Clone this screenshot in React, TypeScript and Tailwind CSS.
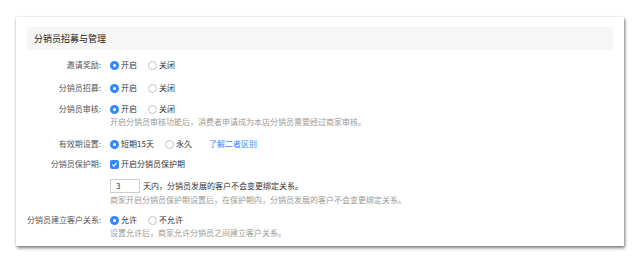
import React from 'react';

function Radio({ checked, label }: { checked?: boolean; label: string }) {
  return (
    <span className="flex items-center">
      {checked ? (
        <span className="flex h-[9px] w-[9px] items-center justify-center rounded-full bg-[#3388ff]">
          <span className="h-[3px] w-[3px] rounded-full bg-white" />
        </span>
      ) : (
        <span className="h-[9px] w-[9px] rounded-full border border-[#c4c4c4] bg-white" />
      )}
      <span className="ml-[2px] text-[#333]">{label}</span>
    </span>
  );
}

function Row({ label, mt, children }: { label: string; mt: string; children: React.ReactNode }) {
  return (
    <div className={`flex ${mt}`}>
      <div className="w-[83px] shrink-0 whitespace-nowrap pr-[9px] text-right leading-[12px] text-[#555]">
        {label}:
      </div>
      <div className="flex-1">{children}</div>
    </div>
  );
}

export default function App() {
  return (
    <div
      className="h-[260px] w-[640px] bg-white pl-[16px] pt-[17px] text-[8px] leading-[12px]"
      style={{ fontFamily: '"Noto Sans CJK SC", "Noto Sans", sans-serif' }}
    >
      <div className="h-[229px] w-[608px] bg-white px-[11px] pt-[10px] shadow-[1px_2px_3px_rgba(0,0,0,0.5),0_0_2px_rgba(0,0,0,0.12)]">
        <div className="flex h-[23px] items-center bg-[#f6f6f6] pl-[7px] text-[9px] text-[#222]">
          分销员招募与管理
        </div>

        <Row label="邀请奖励" mt="mt-[9px]">
          <div className="flex gap-[11px]">
            <Radio checked label="开启" />
            <Radio label="关闭" />
          </div>
        </Row>

        <Row label="分销员招募" mt="mt-[11px]">
          <div className="flex gap-[11px]">
            <Radio checked label="开启" />
            <Radio label="关闭" />
          </div>
        </Row>

        <Row label="分销员审核" mt="mt-[9px]">
          <div className="flex gap-[11px]">
            <Radio checked label="开启" />
            <Radio label="关闭" />
          </div>
          <div className="mt-[1px] text-[#999]">
            开启分销员审核功能后，消费者申请成为本店分销员需要经过商家审核。
          </div>
        </Row>

        <Row label="有效期设置" mt="mt-[10px]">
          <div className="flex items-center">
            <Radio checked label="短期15天" />
            <span className="ml-[11px]">
              <Radio label="永久" />
            </span>
            <span className="ml-[17px] text-[#3388ff]">了解二者区别</span>
          </div>
        </Row>

        <Row label="分销员保护期" mt="mt-[8px]">
          <div className="flex items-center">
            <span className="flex h-[9px] w-[9px] items-center justify-center rounded-[2px] bg-[#3388ff]">
              <svg width="7" height="7" viewBox="0 0 10 10">
                <path d="M2 5.2 L4.2 7.3 L8 2.8" fill="none" stroke="white" strokeWidth="1.6" />
              </svg>
            </span>
            <span className="ml-[2px] text-[#333]">开启分销员保护期</span>
          </div>
          <div className="mt-[9px] flex items-center">
            <div className="flex h-[14px] w-[30px] items-center border border-[#ccc] pl-[5px] text-[#333]">3</div>
            <span className="ml-[3px] text-[#333]">天内，分销员发展的客户不会变更绑定关系。</span>
          </div>
          <div className="mt-[1px] text-[#999]">
            商家开启分销员保护期设置后，在保护期内，分销员发展的客户不会变更绑定关系。
          </div>
        </Row>

        <Row label="分销员建立客户关系" mt="mt-[8px]">
          <div className="flex gap-[11px]">
            <Radio checked label="允许" />
            <Radio label="不允许" />
          </div>
          <div className="mt-[1px] text-[#999]">设置允许后，商家允许分销员之间建立客户关系。</div>
        </Row>
      </div>
    </div>
  );
}
